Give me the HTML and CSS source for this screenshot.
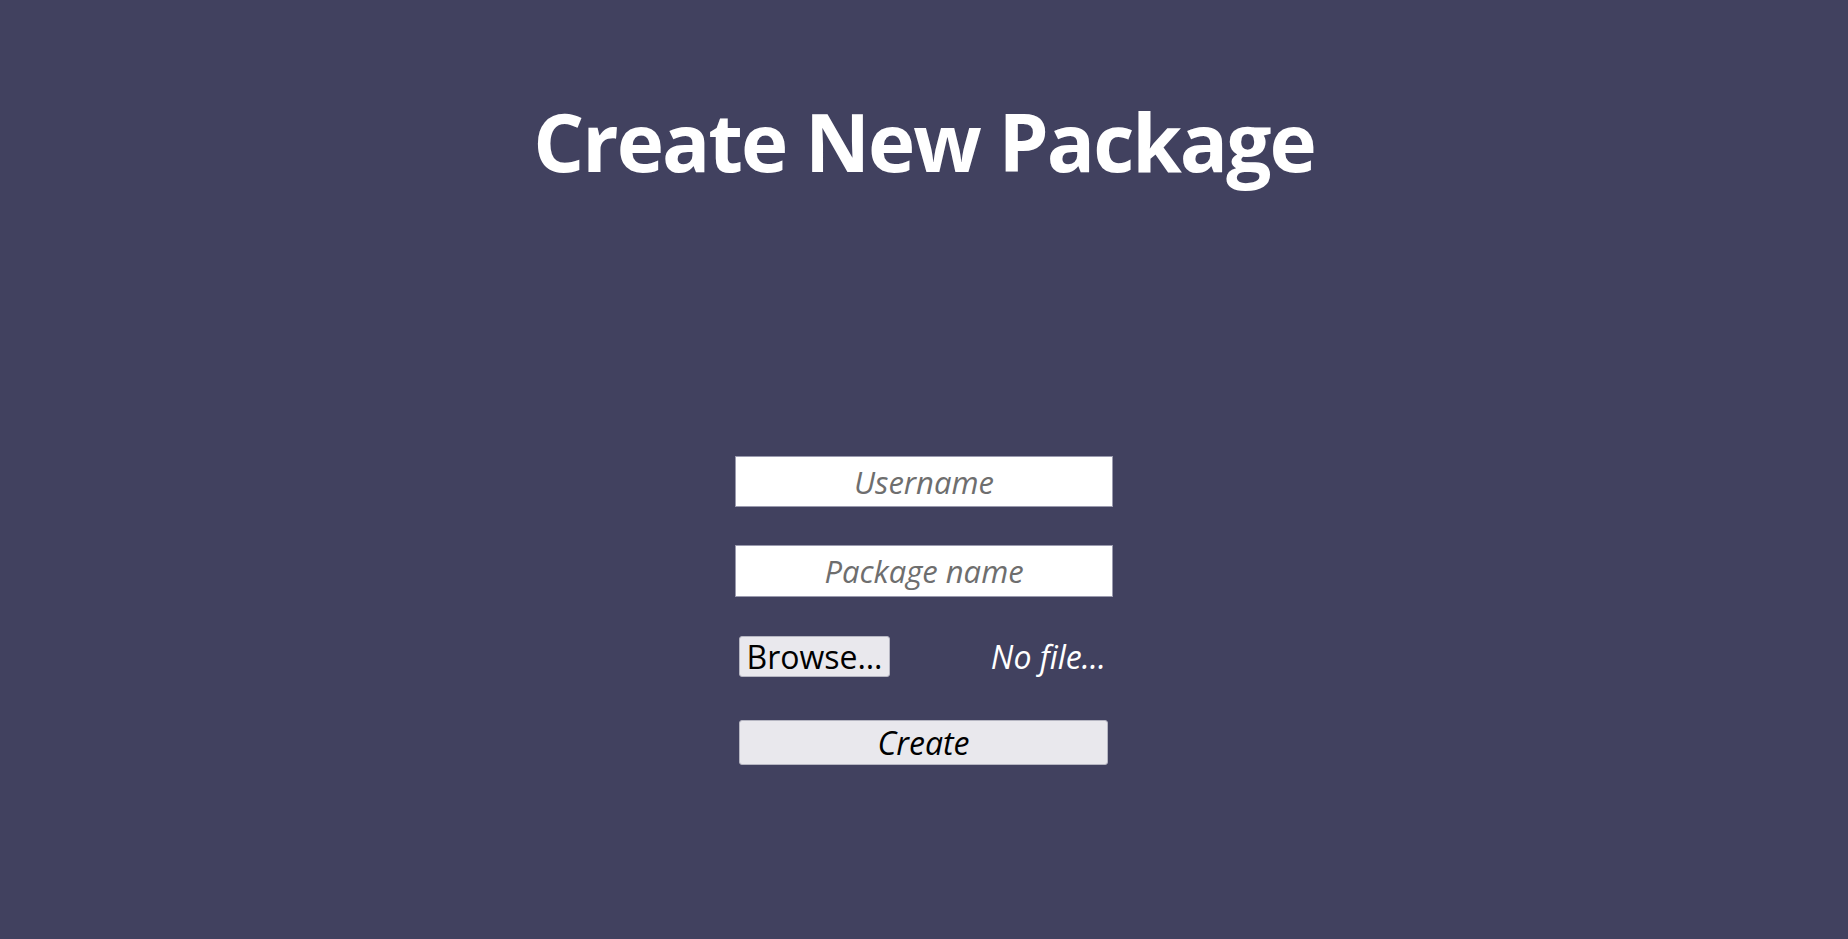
FILE: index.html
```html
<!DOCTYPE html>
<html lang="en">
<head>
<meta charset="utf-8">
<title>Create New Package</title>
<link rel="stylesheet" href="styles.css">
</head>
<body>
<main class="page">
  <h1 class="title">Create New Package</h1>
  <form class="form">
    <input class="field" type="text" placeholder="Username">
    <input class="field field-second" type="text" placeholder="Package name">
    <div class="file-row">
      <button type="button" class="btn browse">Browse…</button>
      <span class="file-name">No file…</span>
    </div>
    <button type="button" class="btn create">Create</button>
  </form>
</main>
</body>
</html>
```
FILE: styles.css
```css
html, body {
  margin: 0;
  padding: 0;
  height: 100%;
}
body {
  background: #41415f;
  font-family: "Open Sans", "Noto Sans", sans-serif;
  color: #ffffff;
}
.page {
  display: flex;
  flex-direction: column;
  align-items: center;
  padding-top: 101px;
}
.title {
  margin: 0;
  font-size: 80px;
  line-height: 80px;
  font-weight: 700;
  letter-spacing: -2px;
  color: #ffffff;
}
.form {
  width: 378px;
  margin-top: 275px;
  display: flex;
  flex-direction: column;
}
.field {
  box-sizing: border-box;
  width: 378px;
  height: 51px;
  margin: 0;
  border: 1px solid #9a9aae;
  background: #ffffff;
  font-family: "Open Sans", "Noto Sans", sans-serif;
  font-style: italic;
  font-size: 31px;
  line-height: 1;
  color: #222;
  text-align: center;
  padding: 0 8px;
  outline: none;
}
.field::placeholder {
  color: #6e6e6e;
  font-style: italic;
}
.field-second {
  margin-top: 38px;
  height: 52px;
}
.file-row {
  margin-top: 39px;
  display: flex;
  align-items: center;
  justify-content: space-between;
  padding: 0 7px 0 4px;
  height: 41px;
}
.btn {
  box-sizing: border-box;
  background: #e9e8ed;
  border: 1px solid #b6b6c2;
  border-radius: 3px;
  color: #000;
  font-family: "Open Sans", "Noto Sans", sans-serif;
  padding: 0;
  margin: 0;
  line-height: 1;
}
.browse {
  width: 151px;
  height: 41px;
  font-size: 32px;
}
.file-name {
  font-style: italic;
  font-size: 32px;
  line-height: 1;
  color: #ffffff;
}
.create {
  margin: 43px 5px 0 4px;
  height: 45px;
  font-size: 32px;
  font-style: italic;
}
```
